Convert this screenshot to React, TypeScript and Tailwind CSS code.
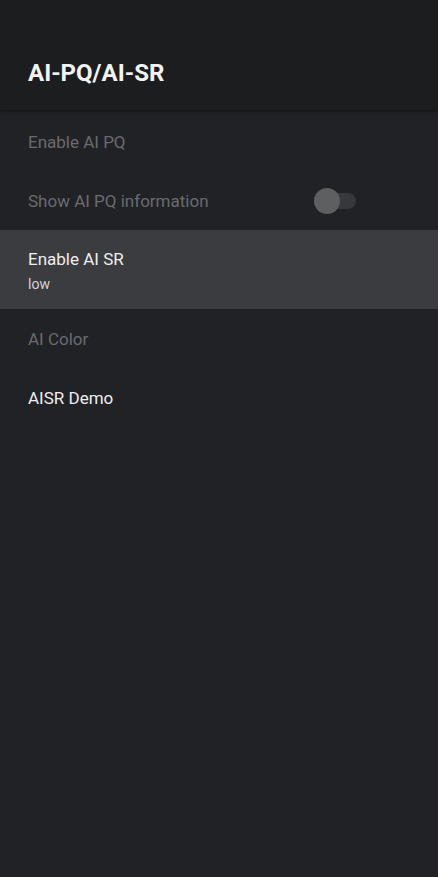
import React from 'react';

const Row: React.FC<{ title: string; sub?: string; disabled?: boolean; selected?: boolean; toggle?: boolean }> = ({ title, sub, disabled, selected, toggle }) => (
  <div className={`flex items-center pl-7 pr-[82px] ${sub ? 'h-[79px] pt-[2px]' : 'h-[59px]'} ${selected ? 'bg-[#3b3c40]' : ''}`}>
    <div className="flex-1 flex flex-col">
      <span className={`text-[17px] leading-[22px] ${disabled ? 'text-[#6a6b6e]' : 'text-[#eeeeee]'}`}>{title}</span>
      {sub && <span className="text-[14px] leading-[18px] mt-[5px] text-[#d4d4d6]">{sub}</span>}
    </div>
    {toggle && (
      <div className="relative w-[42px] h-[26px] flex items-center">
        <div className="w-full h-[16px] rounded-full bg-[#37383c]" />
        <div className="absolute left-0 top-0 w-[26px] h-[26px] rounded-full bg-[#5e5f61]" />
      </div>
    )}
  </div>
);

export default function App() {
  return (
    <div className="w-[438px] h-[877px] bg-[#212226] flex flex-col" style={{ fontFamily: 'Roboto, "Noto Sans", sans-serif' }}>
      <div className="h-[110px] bg-[#1c1d1f] flex items-end pl-7 pb-[23px] shadow-[0_1px_3px_rgba(0,0,0,0.5)] relative z-10">
        <h1 className="text-[24px] leading-[28px] font-bold text-[#f2f2f2]">AI-PQ/AI-SR</h1>
      </div>
      <div className="flex flex-col pt-[2px]">
        <Row title="Enable AI PQ" disabled />
        <Row title="Show AI PQ information" disabled toggle />
        <Row title="Enable AI SR" sub="low" selected />
        <Row title="AI Color" disabled />
        <Row title="AISR Demo" />
      </div>
    </div>
  );
}
